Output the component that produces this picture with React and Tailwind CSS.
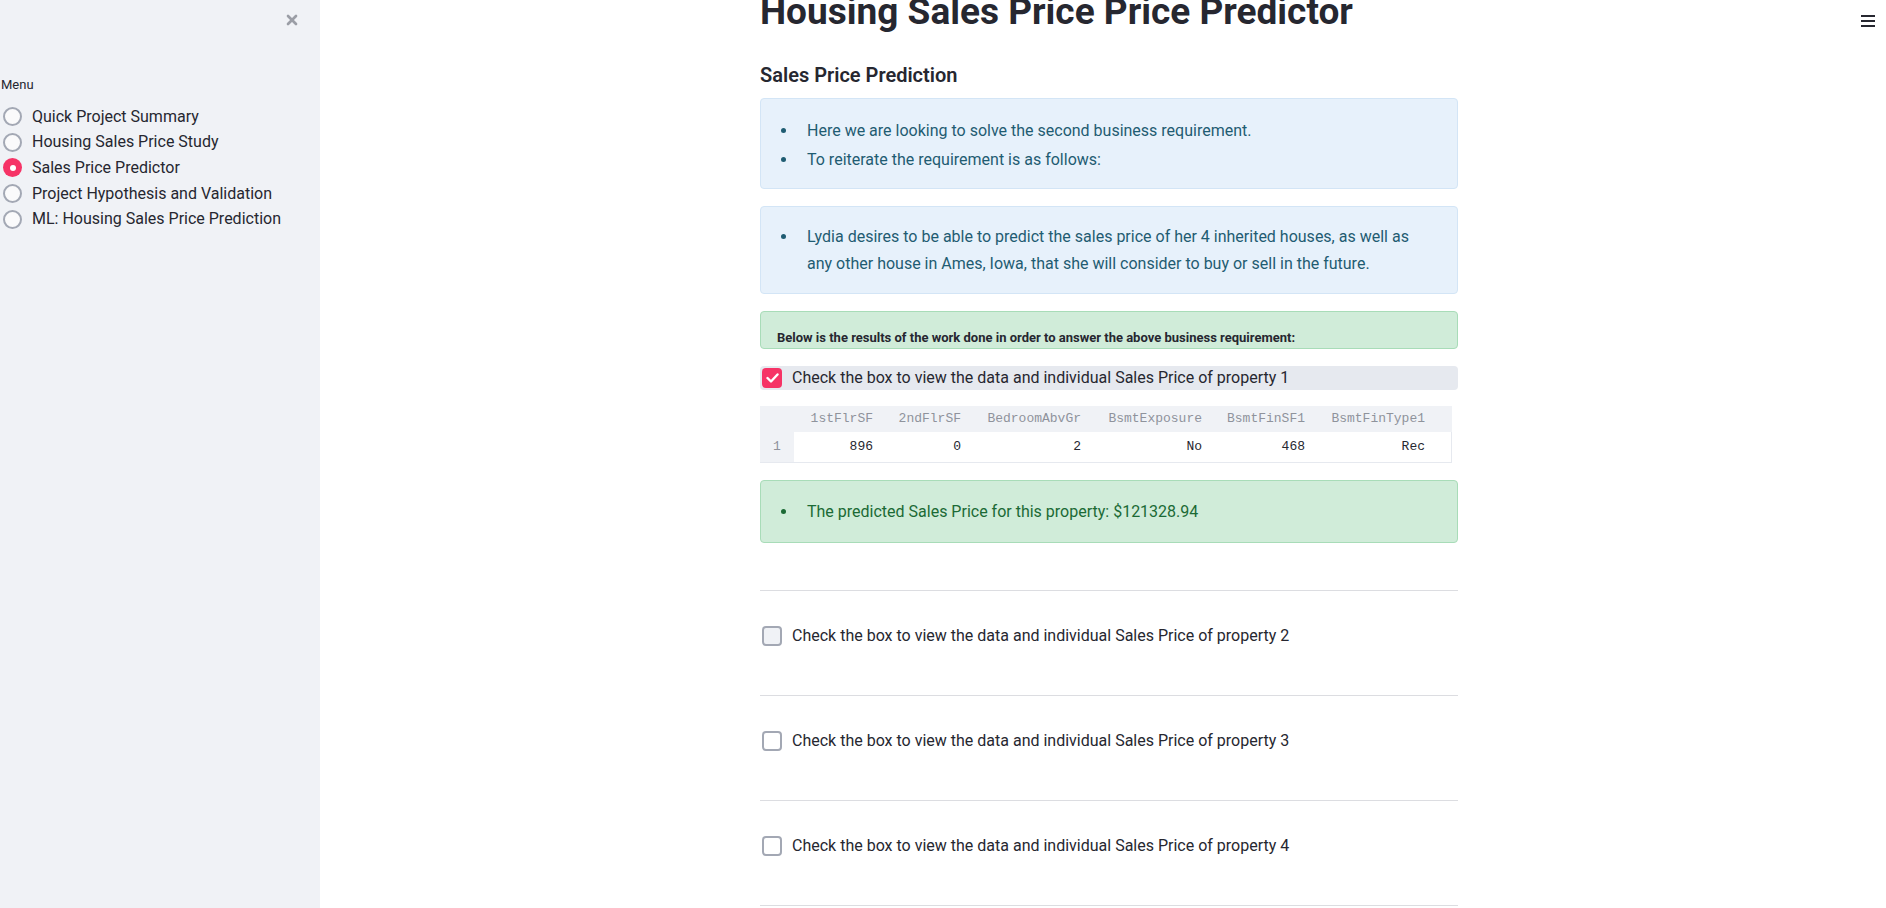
import React from "react";
import { X } from "lucide-react";

const MENU = [
  "Quick Project Summary",
  "Housing Sales Price Study",
  "Sales Price Predictor",
  "Project Hypothesis and Validation",
  "ML: Housing Sales Price Prediction",
];

const COLS = [
  { name: "1stFlrSF", value: "896", w: "w-[91px]" },
  { name: "2ndFlrSF", value: "0", w: "w-[88px]" },
  { name: "BedroomAbvGr", value: "2", w: "w-[120px]" },
  { name: "BsmtExposure", value: "No", w: "w-[121px]" },
  { name: "BsmtFinSF1", value: "468", w: "w-[103px]" },
  { name: "BsmtFinType1", value: "Rec", w: "w-[120px]" },
];

function Radio({ label, selected }) {
  return (
    <div className="flex h-[25.6px] items-center">
      {selected ? (
        <span className="ml-[3px] flex h-[19px] w-[19px] items-center justify-center rounded-full bg-[#f63366]">
          <span className="h-[6px] w-[6px] rounded-full bg-white" />
        </span>
      ) : (
        <span className="ml-[3px] h-[19px] w-[19px] rounded-full border-2 border-[#a3a8b4] bg-[#fafafb]" />
      )}
      <span className="ml-[10px] text-[16px] text-[#262730]">{label}</span>
    </div>
  );
}

function Checkbox({ checked, filled }) {
  if (checked) {
    return (
      <span className="flex h-[20px] w-[20px] items-center justify-center rounded-[4px] bg-[#f63366]">
        <svg width="13" height="10" viewBox="0 0 13 10" fill="none">
          <path d="M1.5 5 L5 8.5 L11.5 1.5" stroke="white" strokeWidth="2.4" strokeLinecap="round" strokeLinejoin="round" />
        </svg>
      </span>
    );
  }
  return (
    <span
      className={`h-[20px] w-[20px] rounded-[4px] border-2 border-[#a3a8b4] ${filled ? "bg-[#f0f2f6]" : "bg-white"}`}
    />
  );
}

function Bullet({ children, color }) {
  return (
    <li className="flex">
      <div className="flex h-[27px] w-[26px] items-center">
        <span className={`h-[5px] w-[5px] rounded-full ${color}`} />
      </div>
      <div className="flex-1">{children}</div>
    </li>
  );
}

function PropertyRow({ n, filled }) {
  return (
    <div className="flex flex-col">
      <div className="h-px bg-[#dcdde1]" />
      <div className="mb-[47px] mt-[33px] flex h-[24px] items-center pl-[2px]">
        <Checkbox filled={filled} />
        <span className="ml-[10px] text-[16px] text-[#262730]">
          Check the box to view the data and individual Sales Price of property {n}
        </span>
      </div>
    </div>
  );
}

export default function App() {
  return (
    <div className="relative flex h-[908px] w-full overflow-hidden bg-white font-['Roboto',sans-serif] text-[#262730]">
      <aside className="relative h-full w-[320px] shrink-0 bg-[#f0f2f6]">
        <button className="absolute left-[284px] top-[12px] text-[#9b9ea6]" aria-label="Close">
          <X size={16} strokeWidth={4} />
        </button>
        <div className="pt-[76px]">
          <div className="pl-[1px] text-[13px] leading-[18px]">Menu</div>
          <div className="mt-[10px] flex flex-col">
            {MENU.map((m) => (
              <Radio key={m} label={m} selected={m === "Sales Price Predictor"} />
            ))}
          </div>
        </div>
      </aside>

      <main className="relative flex-1">
        <button className="absolute right-[11px] top-[15px]" aria-label="Menu">
          <svg width="14" height="12" viewBox="0 0 14 12">
            <rect x="0" y="0" width="14" height="2" fill="#262730" />
            <rect x="0" y="5" width="14" height="2" fill="#262730" />
            <rect x="0" y="10" width="14" height="2" fill="#262730" />
          </svg>
        </button>

        <div className="ml-[440px] flex w-[698px] flex-col">
          <h1 className="-mt-[7px] text-[37px] font-bold leading-[37.5px]">
            Housing Sales Price Price Predictor
          </h1>
          <h3 className="mt-[30px] text-[20px] font-semibold leading-[28px]">Sales Price Prediction</h3>

          <div className="mt-[9px] rounded-[4px] border border-[#d3e5f6] bg-[#e7f1fb] pb-[15px] pl-[20px] pr-4 pt-[18px] text-[16px] leading-[27px] text-[#1f5c72]">
            <ul className="flex flex-col gap-[2px]">
              <Bullet color="bg-[#1f5c72]">Here we are looking to solve the second business requirement.</Bullet>
              <Bullet color="bg-[#1f5c72]">To reiterate the requirement is as follows:</Bullet>
            </ul>
          </div>

          <div className="mt-[17px] rounded-[4px] border border-[#d3e5f6] bg-[#e7f1fb] pb-[16px] pl-[20px] pr-4 pt-[16px] text-[16px] leading-[27px] text-[#1f5c72]">
            <ul>
              <Bullet color="bg-[#1f5c72]">
                Lydia desires to be able to predict the sales price of her 4 inherited houses, as well as
                <br />
                any other house in Ames, Iowa, that she will consider to buy or sell in the future.
              </Bullet>
            </ul>
          </div>

          <div className="mt-[17px] h-[38px] rounded-[4px] border border-[#a8dcb8] bg-[#d0ecd9] pl-[16px] pt-[18px]">
            <div className="text-[13px] font-bold leading-[16px] text-[#262730]">
              Below is the results of the work done in order to answer the above business requirement:
            </div>
          </div>

          <div className="mt-[17px] flex h-[24px] items-center rounded-[4px] bg-[#e6e9ef] pl-[2px]">
            <Checkbox checked />
            <span className="ml-[10px] text-[16px] text-[#262730]">
              Check the box to view the data and individual Sales Price of property 1
            </span>
          </div>

          <div className="mt-[16px] w-[692px] font-['Liberation_Mono',monospace] text-[13px]">
            <div className="flex h-[26px] items-center bg-[#f0f2f6] text-[#8f939c]">
              <div className="w-[34px]" />
              {COLS.map((c) => (
                <div key={c.name} className={`${c.w} pr-[12px] text-right`}>
                  {c.name}
                </div>
              ))}
            </div>
            <div className="flex h-[31px] items-stretch border-b border-r border-[#e6e9ef]">
              <div className="flex w-[34px] items-center justify-center bg-[#f0f2f6] text-[#8f939c]">1</div>
              {COLS.map((c) => (
                <div key={c.name} className={`${c.w} flex items-center justify-end pr-[12px] text-[#262730]`}>
                  {c.value}
                </div>
              ))}
            </div>
          </div>

          <div className="mt-[17px] flex h-[63px] items-center rounded-[4px] border border-[#a8dcb8] bg-[#d0ecd9] pl-[20px] text-[16px] leading-[27px] text-[#1b6a35]">
            <ul>
              <Bullet color="bg-[#1b6a35]">The predicted Sales Price for this property: $121328.94</Bullet>
            </ul>
          </div>

          <div className="mt-[47px] flex flex-col">
            <PropertyRow n={2} filled />
            <PropertyRow n={3} />
            <PropertyRow n={4} />
            <div className="h-px bg-[#dcdde1]" />
          </div>
        </div>
      </main>
    </div>
  );
}
